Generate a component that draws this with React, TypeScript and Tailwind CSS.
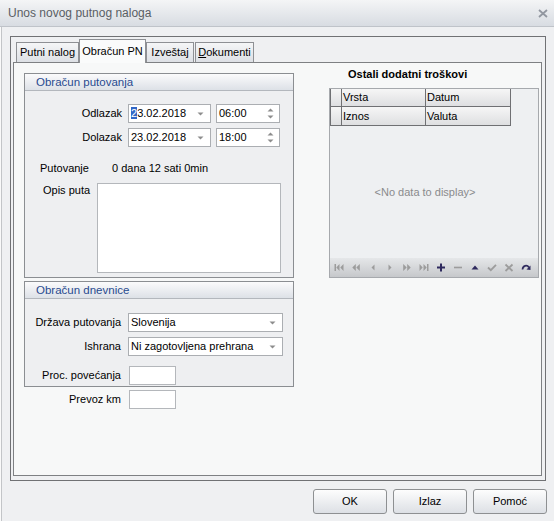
import React from "react";

const GREY = "#9c9c9c";
const DARK = "#2f2a5e";

function DownTri() {
  return (
    <svg width="7" height="4" viewBox="0 0 7 4">
      <path d="M0.5 0.5 L6.5 0.5 L3.5 3.5Z" fill="#8d8d8d" />
    </svg>
  );
}

function Spin() {
  return (
    <div className="flex flex-col items-center gap-[3px]">
      <svg width="7" height="4" viewBox="0 0 7 4">
        <path d="M0.5 3.5 L6.5 3.5 L3.5 0.5Z" fill="#8d8d8d" />
      </svg>
      <svg width="7" height="4" viewBox="0 0 7 4">
        <path d="M0.5 0.5 L6.5 0.5 L3.5 3.5Z" fill="#8d8d8d" />
      </svg>
    </div>
  );
}

function Group({ title, className, children }: { title: string; className: string; children: React.ReactNode }) {
  return (
    <div className={"border border-[#8b8e92] bg-[#eeeff1] flex flex-col " + className}>
      <div className="h-[17px] border-b border-[#b3b7bd] bg-linear-to-b from-[#fbfbfc] to-[#dde1e7] pl-[11px] text-[#284a8f] text-[11.5px] leading-[16px]">
        {title}
      </div>
      {children}
    </div>
  );
}

function NavIcon({ kind }: { kind: string }) {
  let el: React.ReactNode = null;
  switch (kind) {
    case "first":
      el = (
        <g fill={GREY}>
          <rect x="0.5" y="1" width="1.5" height="7" />
          <path d="M5.5 1 L2.3 4.5 L5.5 8Z M9.5 1 L6.3 4.5 L9.5 8Z" />
        </g>
      );
      break;
    case "prevPage":
      el = <path d="M4.8 1 L1.3 4.5 L4.8 8Z M8.8 1 L5.3 4.5 L8.8 8Z" fill={GREY} />;
      break;
    case "prev":
      el = <path d="M6.5 1.5 L3.5 4.5 L6.5 7.5Z" fill={GREY} />;
      break;
    case "next":
      el = <path d="M3.5 1.5 L6.5 4.5 L3.5 7.5Z" fill={GREY} />;
      break;
    case "nextPage":
      el = <path d="M1.2 1 L4.7 4.5 L1.2 8Z M5.2 1 L8.7 4.5 L5.2 8Z" fill={GREY} />;
      break;
    case "last":
      el = (
        <g fill={GREY}>
          <path d="M0.5 1 L3.7 4.5 L0.5 8Z M4.5 1 L7.7 4.5 L4.5 8Z" />
          <rect x="8" y="1" width="1.5" height="7" />
        </g>
      );
      break;
    case "plus":
      el = (
        <g fill={DARK}>
          <rect x="1" y="3.5" width="8" height="2" />
          <rect x="4" y="0.5" width="2" height="8" />
        </g>
      );
      break;
    case "minus":
      el = <rect x="1" y="3.7" width="8" height="1.6" fill={GREY} />;
      break;
    case "up":
      el = <path d="M1.5 6.5 L5 2.5 L8.5 6.5Z" fill={DARK} />;
      break;
    case "check":
      el = <path d="M1 4.5 L3.8 7.2 L9 1.8" stroke={GREY} strokeWidth="1.8" fill="none" />;
      break;
    case "x":
      el = <path d="M1.5 1.5 L8.5 8 M8.5 1.5 L1.5 8" stroke={GREY} strokeWidth="1.8" fill="none" />;
      break;
    case "refresh":
      el = (
        <g>
          <path d="M1.5 6.5 C1.8 2.5 6 1.5 8 4.5" stroke={DARK} strokeWidth="1.7" fill="none" />
          <path d="M9.5 2.5 L9.5 7 L5.5 6.5Z" fill={DARK} />
        </g>
      );
      break;
  }
  return (
    <div className="w-[17px] h-[19px] flex items-center justify-center">
      <svg width="10" height="9" viewBox="0 0 10 9">
        {el}
      </svg>
    </div>
  );
}

function Button({ label }: { label: string }) {
  return (
    <div className="w-[74px] h-[25px] border border-[#8e9092] rounded-[3px] bg-linear-to-b from-[#fdfdfd] to-[#dde0e5] flex items-center justify-center text-[11px]">
      {label}
    </div>
  );
}

export default function App() {
  const navKinds = ["first", "prevPage", "prev", "next", "nextPage", "last", "plus", "minus", "up", "check", "x", "refresh"];
  return (
    <div className="w-[554px] h-[521px] bg-[#eff0f2] flex flex-col overflow-hidden font-['Liberation_Sans',Arial,sans-serif] text-[11px] text-black">
      {/* Title bar */}
      <div className="h-[27px] shrink-0 border-b border-[#bfc3c9] bg-linear-to-b from-[#f4f5f6] to-[#d8dce2] flex items-center justify-between pl-[8px] pr-[6px]">
        <span className="text-[12px] text-[#5a5e64]">Unos novog putnog naloga</span>
        <svg width="10" height="9" viewBox="0 0 10 9">
          <path d="M1 1 L9 8 M9 1 L1 8" stroke="#9297a0" strokeWidth="1.8" />
        </svg>
      </div>

      {/* Body */}
      <div className="flex-1 flex flex-col shadow-[inset_1px_0_0_#fafafa,inset_2px_0_0_#c3c5c8]">
        <div className="mt-[9px] ml-[10px] w-[536px] h-[445px] border border-[#707174] pt-[2px] pl-[2px] flex flex-col">
          {/* Tabs */}
          <div className="h-[23px] flex items-end pl-[3px]">
            <div className="w-[63px] h-[20px] border border-b-0 border-[#8e9094] bg-linear-to-b from-[#f5f6f7] to-[#dde0e5] flex items-center justify-center">
              Putni nalog
            </div>
            <div className="relative z-10 -mb-px w-[67px] h-[24px] border border-b-0 border-[#8e9094] bg-[#fafbfb] flex items-center justify-center pb-[1px]">
              Obračun PN
            </div>
            <div className="w-[48px] h-[20px] border border-b-0 border-[#8e9094] bg-linear-to-b from-[#f5f6f7] to-[#dde0e5] flex items-center justify-center">
              Izveštaj
            </div>
            <div className="ml-[1px] w-[59px] h-[20px] border border-b-0 border-[#8e9094] bg-linear-to-b from-[#f5f6f7] to-[#dde0e5] flex items-center justify-center">
              <span>
                <u>D</u>okumenti
              </span>
            </div>
          </div>

          {/* Tab page */}
          <div className="w-[529px] h-[414px] border border-[#7e8083] bg-[#f7f8f8] flex items-start pl-[10px] pt-[4px] gap-[35px]">
            {/* Left column */}
            <div className="w-[270px] mt-[6px] flex flex-col">
              <Group title="Obračun putovanja" className="h-[205px]">
                <div className="pt-[13px] flex flex-col">
                  <div className="flex items-center h-[19px]">
                    <div className="w-[98px] text-right pr-[1px]">Odlazak</div>
                    <div className="ml-[5px] w-[83px] h-[19px] border border-[#abaeb2] bg-white flex items-center pl-[2px] pr-[6px] justify-between">
                      <span>
                        <span className="bg-[#3166c6] text-white">2</span>3.02.2018
                      </span>
                      <DownTri />
                    </div>
                    <div className="ml-[5px] w-[64px] h-[19px] border border-[#abaeb2] bg-white flex items-center pl-[2px] pr-[5px] justify-between">
                      <span>06:00</span>
                      <Spin />
                    </div>
                  </div>
                  <div className="flex items-center h-[19px] mt-[5px]">
                    <div className="w-[98px] text-right pr-[1px]">Dolazak</div>
                    <div className="ml-[5px] w-[83px] h-[19px] border border-[#abaeb2] bg-white flex items-center pl-[2px] pr-[6px] justify-between">
                      <span>23.02.2018</span>
                      <DownTri />
                    </div>
                    <div className="ml-[5px] w-[64px] h-[19px] border border-[#abaeb2] bg-white flex items-center pl-[2px] pr-[5px] justify-between">
                      <span>18:00</span>
                      <Spin />
                    </div>
                  </div>
                  <div className="flex items-center h-[19px] mt-[12px]">
                    <div className="w-[87px] pl-[15px]">Putovanje</div>
                    <div>0 dana 12 sati 0min</div>
                  </div>
                  <div className="flex mt-[5px]">
                    <div className="w-[72px] pl-[18px] pt-[1px] leading-[13px]">Opis puta</div>
                    <div className="w-[184px] h-[90px] border border-[#b4b7bb] bg-white" />
                  </div>
                </div>
              </Group>

              <Group title="Obračun dnevnice" className="mt-[3px] h-[106px]">
                <div className="pt-[14px] flex flex-col">
                  <div className="flex items-center h-[19px]">
                    <div className="w-[96px] text-right">Država putovanja</div>
                    <div className="ml-[7px] w-[155px] h-[19px] border border-[#abaeb2] bg-white flex items-center pl-[2px] pr-[6px] justify-between">
                      <span>Slovenija</span>
                      <DownTri />
                    </div>
                  </div>
                  <div className="flex items-center h-[19px] mt-[5px]">
                    <div className="w-[96px] text-right">Ishrana</div>
                    <div className="ml-[7px] w-[155px] h-[19px] border border-[#abaeb2] bg-white flex items-center pl-[2px] pr-[6px] justify-between">
                      <span>Ni zagotovljena prehrana</span>
                      <DownTri />
                    </div>
                  </div>
                  <div className="flex items-center h-[19px] mt-[10px]">
                    <div className="w-[96px] text-right">Proc. povećanja</div>
                    <div className="ml-[8px] w-[47px] h-[19px] border border-[#b4b7bb] bg-white" />
                  </div>
                </div>
              </Group>

              <div className="flex items-center h-[19px] mt-[3px]">
                <div className="w-[97px] text-right">Prevoz km</div>
                <div className="ml-[8px] w-[47px] h-[19px] border border-[#b4b7bb] bg-white" />
              </div>
            </div>

            {/* Right column */}
            <div className="w-[210px] flex flex-col">
              <div className="h-[21px] leading-[14px] font-bold text-[11px] pl-[19px]">Ostali dodatni troškovi</div>
              <div className="h-[190px] border border-[#a6a9ad] bg-[#eef0f2] flex flex-col">
                <div className="flex flex-col w-[181px] border-l border-[#6f7073]">
                  <div className="flex h-[18px] border-b border-[#6f7073]">
                    <div className="w-[11px] border-r border-[#6f7073] bg-linear-to-b from-[#f6f6f6] to-[#dedfe1]" />
                    <div className="w-[84px] border-r border-[#6f7073] bg-linear-to-b from-[#f6f6f6] to-[#dedfe1] pl-[1px] leading-[17px]">Vrsta</div>
                    <div className="w-[85px] border-r border-[#6f7073] bg-linear-to-b from-[#f6f6f6] to-[#dedfe1] pl-[1px] leading-[17px]">Datum</div>
                  </div>
                  <div className="flex h-[19px] border-b border-[#6f7073]">
                    <div className="w-[11px] border-r border-[#6f7073] bg-linear-to-b from-[#f6f6f6] to-[#dedfe1]" />
                    <div className="w-[84px] border-r border-[#6f7073] bg-linear-to-b from-[#f6f6f6] to-[#dedfe1] pl-[1px] leading-[18px]">Iznos</div>
                    <div className="w-[85px] border-r border-[#6f7073] bg-linear-to-b from-[#f6f6f6] to-[#dedfe1] pl-[1px] leading-[18px]">Valuta</div>
                  </div>
                </div>
                <div className="flex-1 flex items-center justify-center text-[#8a8b8d] pr-[18px]">&lt;No data to display&gt;</div>
                <div className="h-[19px] flex items-center bg-linear-to-b from-[#e5e7e9] to-[#c6c8cb]">
                  {navKinds.map((k) => (
                    <NavIcon key={k} kind={k} />
                  ))}
                </div>
              </div>
            </div>
          </div>
        </div>

        {/* Buttons */}
        <div className="mt-[8px] flex justify-end gap-[6px] pr-[7px]">
          <Button label="OK" />
          <Button label="Izlaz" />
          <Button label="Pomoć" />
        </div>
      </div>
    </div>
  );
}
